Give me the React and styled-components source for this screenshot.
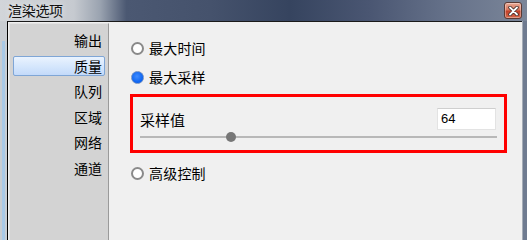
import React from "react";
import styled, { createGlobalStyle } from "styled-components";

const GlobalStyle = createGlobalStyle`
  html, body { margin: 0; padding: 0; background: #ffffff; }
  * { box-sizing: border-box; }
`;

const navItems = ["输出", "质量", "队列", "区域", "网络", "通道"];

export default function App() {
  const value = 64;
  const percent = 25.6;
  return (
    <>
      <GlobalStyle />
      <Window>
        <TitleBar>
          <Title>渲染选项</Title>
          <CloseButton>
            <svg width="11" height="10" viewBox="0 0 11 10">
              <path
                d="M2 1.5 L9 8.5 M9 1.5 L2 8.5"
                stroke="#3a2a28"
                strokeWidth="3.4"
                strokeLinecap="round"
              />
              <path
                d="M2 1.5 L9 8.5 M9 1.5 L2 8.5"
                stroke="#ffffff"
                strokeWidth="1.8"
                strokeLinecap="round"
              />
            </svg>
          </CloseButton>
        </TitleBar>
        <Body>
          <LeftEdge>
            <Stripe />
          </LeftEdge>
          <Frame>
            <Sidebar>
              {navItems.map((label) => (
                <NavItem key={label} $active={label === "质量"}>
                  {label}
                </NavItem>
              ))}
            </Sidebar>
            <Content>
              <RadioRow $top={16}>
                <Radio />
                <RadioLabel>最大时间</RadioLabel>
              </RadioRow>
              <RadioRow $top={9}>
                <Radio $checked />
                <RadioLabel>最大采样</RadioLabel>
              </RadioRow>
              <HighlightBox>
                <ValueRow>
                  <FieldLabel>采样值</FieldLabel>
                  <NumberInput>{value}</NumberInput>
                </ValueRow>
                <Slider>
                  <Track />
                  <Thumb style={{ left: `${percent}%` }} />
                </Slider>
              </HighlightBox>
              <RadioRow $top={10}>
                <Radio />
                <RadioLabel>高级控制</RadioLabel>
              </RadioRow>
            </Content>
          </Frame>
          <RightEdge />
        </Body>
      </Window>
    </>
  );
}

const Window = styled.div`
  width: 527px;
  height: 240px;
  overflow: hidden;
  display: flex;
  flex-direction: column;
  font-family: "Noto Sans CJK SC", "Noto Sans", sans-serif;
  background: linear-gradient(
    90deg,
    #d2d5d9 0%,
    #c6cad0 14%,
    #9aa3b0 19%,
    #4b5872 24%,
    #45526c 40%,
    #36445f 55%,
    #4a5672 70%,
    #66728a 85%,
    #7b8699 100%
  );
`;

const TitleBar = styled.div`
  height: 21px;
  display: flex;
  align-items: flex-start;
  justify-content: space-between;
  padding: 0 5px 0 8px;
`;

const Title = styled.div`
  font-size: 14px;
  line-height: 20px;
  color: #111111;
  letter-spacing: -0.3px;
  text-shadow: 0 0 6px rgba(255, 255, 255, 0.8);
`;

const CloseButton = styled.div`
  width: 18px;
  height: 17px;
  margin-top: 2px;
  border: 1px solid #5b3a34;
  border-radius: 3px;
  display: flex;
  align-items: center;
  justify-content: center;
  background: linear-gradient(
    180deg,
    #e9a995 0%,
    #d9775e 45%,
    #c2412a 55%,
    #d3674a 100%
  );
  box-shadow: inset 0 0 0 1px rgba(255, 255, 255, 0.35);
`;

const Body = styled.div`
  flex: 1;
  display: flex;
  flex-direction: row;
`;

const LeftEdge = styled.div`
  width: 7px;
  background: #c9cdd2;
  padding: 0 2px;
`;

const Stripe = styled.div`
  width: 3px;
  height: 100%;
  margin-top: 20px;
  background: #a9c9e6;
`;

const RightEdge = styled.div`
  width: 5px;
  border-left: 1px solid #a5acb6;
  background: #6f7b90;
`;

const Frame = styled.div`
  flex: 1;
  display: flex;
  flex-direction: row;
  border-top: 1px solid #1a1a1a;
  border-left: 1px solid #000000;
  background: #f0f0f0;
`;

const Sidebar = styled.div`
  width: 100px;
  margin: 1px 0 0 1px;
  padding: 6px 3px 0 3px;
  display: flex;
  flex-direction: column;
  gap: 5.6px;
  background: #d3d3d3;
  border-left: 1px solid #e2e2e2;
  border-top: 1px solid #e2e2e2;
  border-right: 1px solid #9a9a9a;
`;

const NavItem = styled.div`
  height: 20px;
  padding-right: 2px;
  text-align: right;
  font-size: 14px;
  line-height: 20px;
  color: #000000;
  border-radius: 2px;
  border: 1px solid ${(p) => (p.$active ? "#7fa6d6" : "transparent")};
  background: ${(p) =>
    p.$active
      ? "linear-gradient(180deg, #eaf3fe 0%, #d6e7fc 50%, #c3dafa 100%)"
      : "transparent"};
  line-height: 18px;
`;

const Content = styled.div`
  flex: 1;
  padding: 0 15px 0 21px;
  display: flex;
  flex-direction: column;
  align-items: stretch;
`;

const RadioRow = styled.div`
  height: 20px;
  margin-top: ${(p) => p.$top}px;
  display: flex;
  align-items: center;
  gap: 5px;
`;

const Radio = styled.span`
  width: 13px;
  height: 13px;
  border-radius: 50%;
  margin-left: 1px;
  flex: none;
  border: ${(p) => (p.$checked ? "1px solid #6e8fc4" : "2px solid #8a8a8a")};
  background: ${(p) =>
    p.$checked
      ? "radial-gradient(circle at 45% 40%, #3f8cff 0%, #0a62f0 70%)"
      : "#ffffff"};
`;

const RadioLabel = styled.span`
  font-size: 14px;
  color: #000000;
  letter-spacing: 0.2px;
`;

const HighlightBox = styled.div`
  margin-top: 7px;
  height: 59px;
  border: 3px solid #ff0000;
  padding: 11px 8px 0 7px;
  display: flex;
  flex-direction: column;
`;

const ValueRow = styled.div`
  height: 22px;
  display: flex;
  align-items: center;
  justify-content: space-between;
`;

const FieldLabel = styled.span`
  font-size: 15px;
  color: #000000;
`;

const NumberInput = styled.div`
  width: 59px;
  height: 22px;
  background: #ffffff;
  border: 1px solid #e3e3e3;
  border-top-color: #cfcfcf;
  padding-left: 3px;
  font-family: "Liberation Sans", Arial, sans-serif;
  font-size: 13px;
  line-height: 20px;
  color: #000000;
`;

const Slider = styled.div`
  position: relative;
  height: 14px;
  margin-left: 0;
  margin-right: -1px;
`;

const Track = styled.div`
  position: absolute;
  left: 0;
  right: 0;
  top: 6px;
  height: 2px;
  background: #b8b8b8;
`;

const Thumb = styled.div`
  position: absolute;
  top: 2px;
  width: 10px;
  height: 10px;
  margin-left: -5px;
  border-radius: 50%;
  background: #777777;
`;
